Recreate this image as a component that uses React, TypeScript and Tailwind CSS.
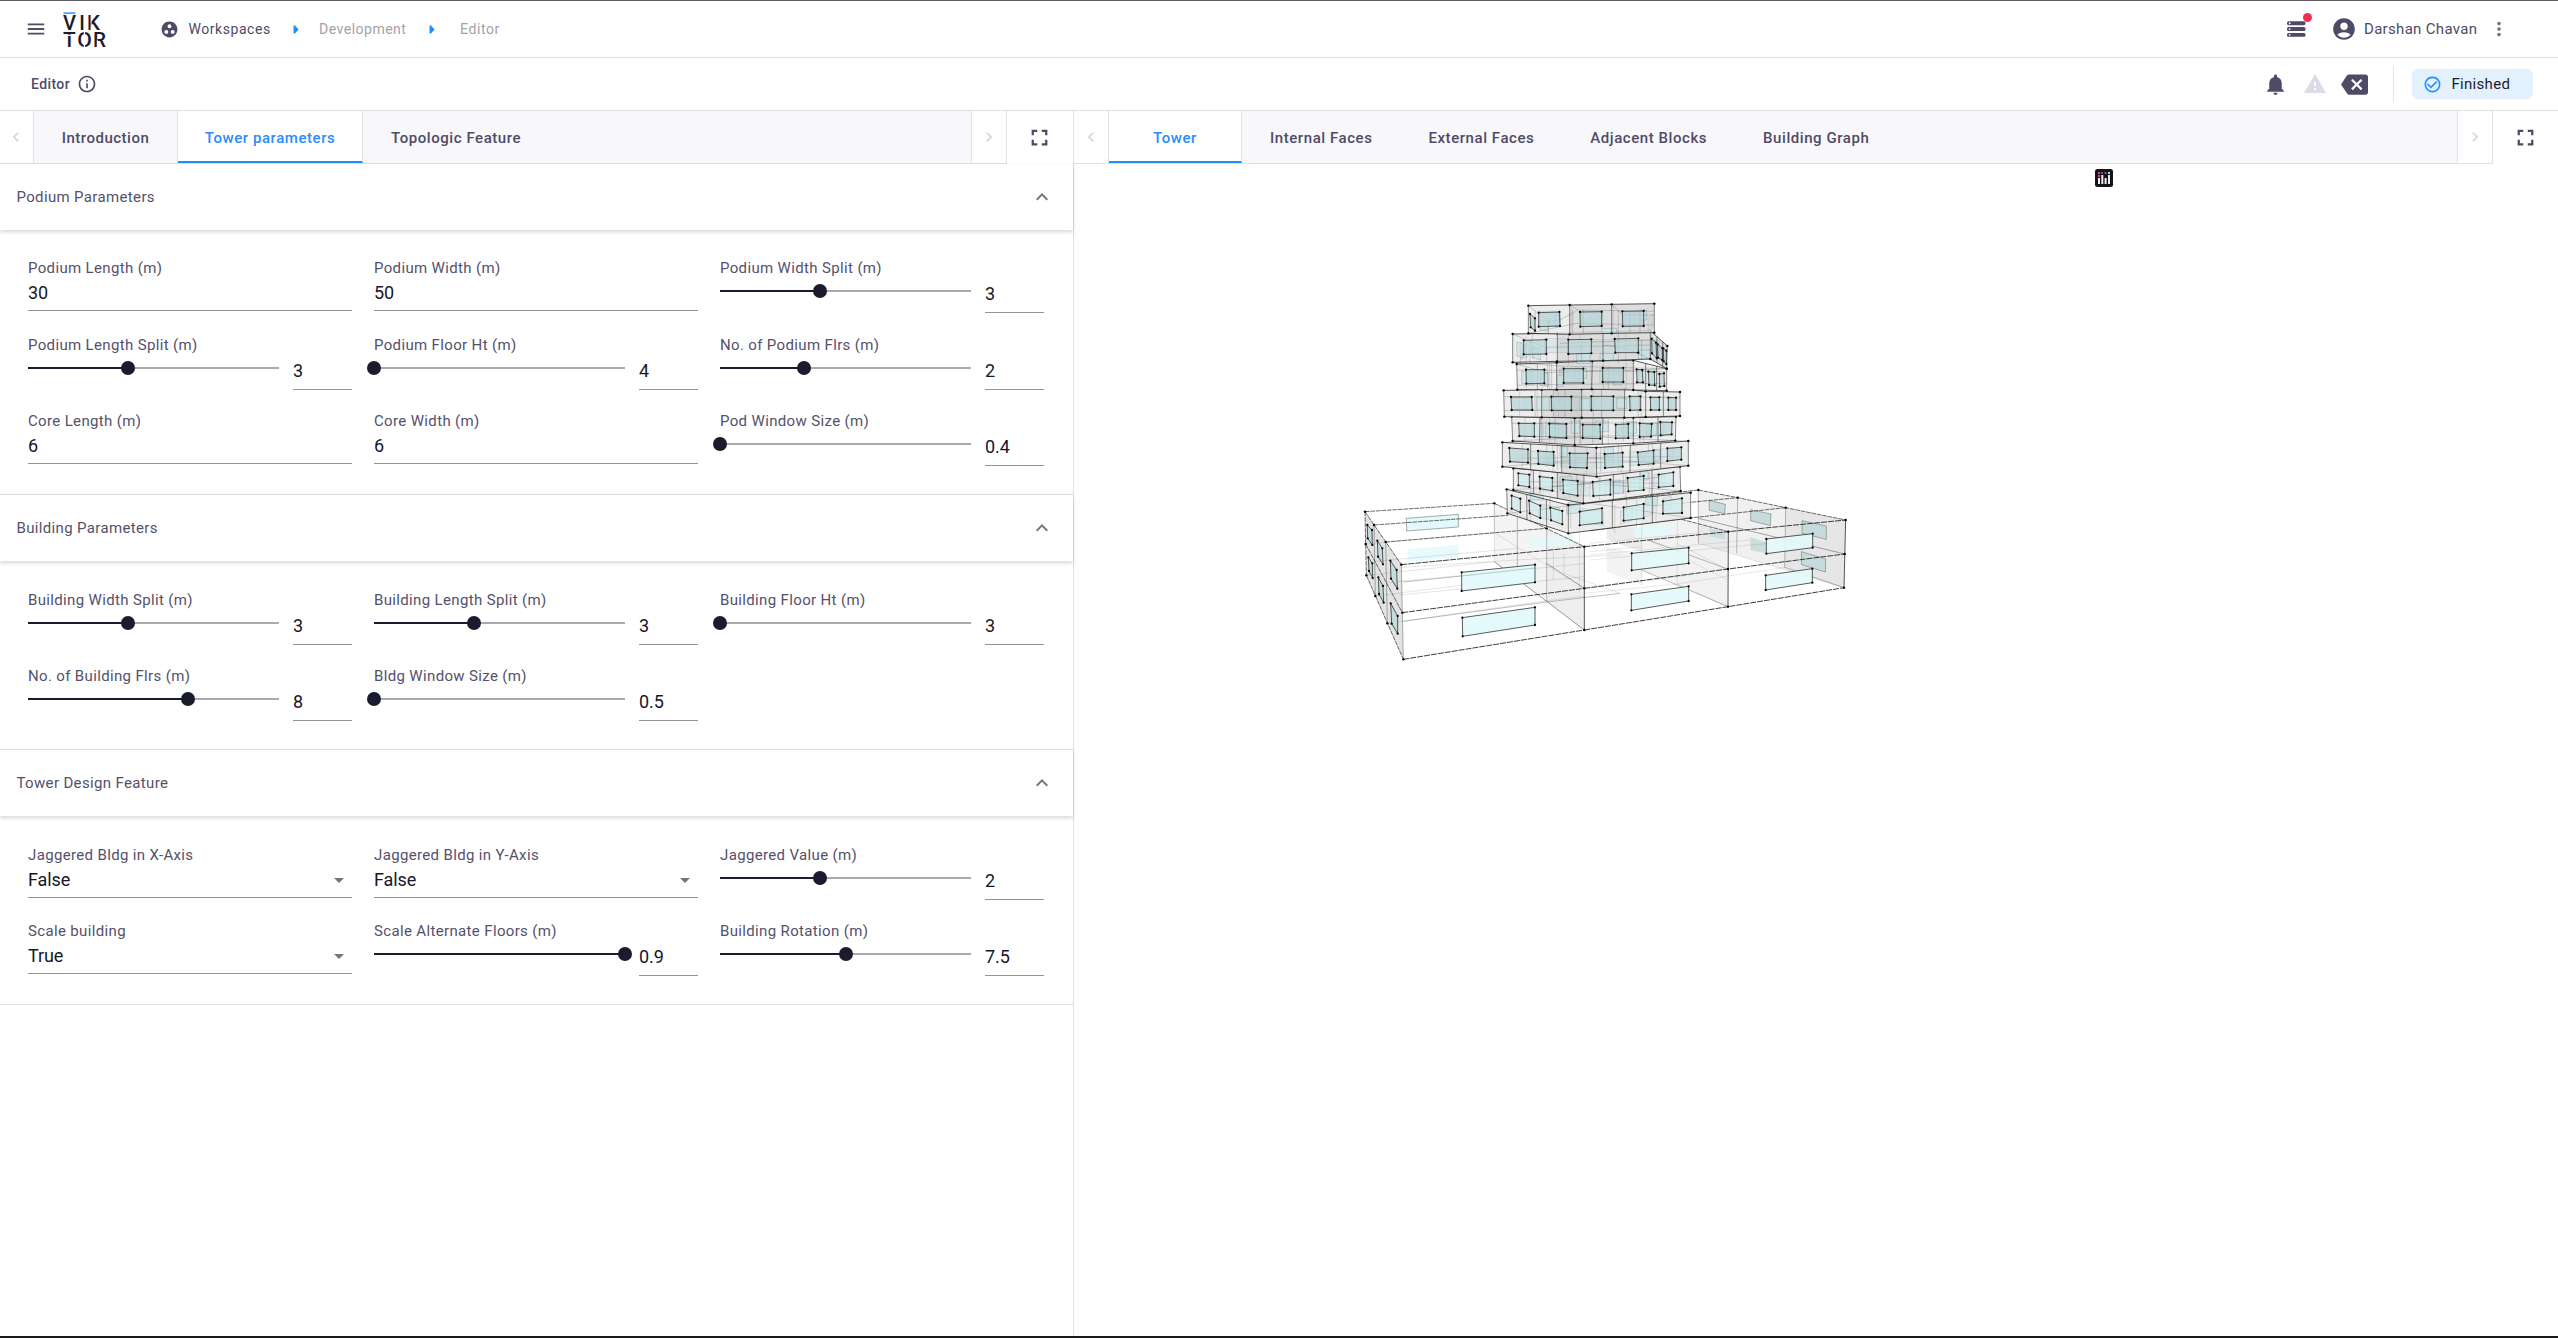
import type { ReactNode } from "react";
import {
  MdAccountCircle,
  MdArrowDropDown,
  MdBackspace,
  MdCheckCircleOutline,
  MdChevronLeft,
  MdChevronRight,
  MdExpandLess,
  MdFullscreen,
  MdGroupWork,
  MdInfoOutline,
  MdMenu,
  MdMoreVert,
  MdNotifications,
  MdWarning,
} from "react-icons/md";

/* ---------- header ---------- */

function Logo() {
  return (
    <svg className="mt-px ml-[26px] h-9 w-11 shrink-0 overflow-visible" viewBox="0 0 44 36" fontFamily="Roboto" fontWeight="500" fill="#1b1b2e">
      <rect x="0.5" y="0.4" width="12" height="1.4" fill="#1f8fff" />
      <g fontSize="21">
        <text x="0" y="18.2" textLength="13" lengthAdjust="spacingAndGlyphs">V</text>
        <text x="16.2" y="18.2" textLength="5.6" lengthAdjust="spacingAndGlyphs">I</text>
        <text x="24" y="18.2" textLength="13" lengthAdjust="spacingAndGlyphs">K</text>
        <text x="0" y="35.4" textLength="12.6" lengthAdjust="spacingAndGlyphs">T</text>
        <text x="14.2" y="35.4" textLength="14.6" lengthAdjust="spacingAndGlyphs">O</text>
        <text x="30" y="35.4" textLength="13" lengthAdjust="spacingAndGlyphs">R</text>
      </g>
      <g fill="#fff">
        <rect x="0" y="22.6" width="13" height="1.3" />
        <rect x="20.8" y="19" width="1.3" height="17" />
        <rect x="27.6" y="2.5" width="1" height="16.5" />
        <rect x="33.8" y="27.6" width="1" height="8.4" />
      </g>
    </svg>
  );
}

function Crumb() {
  return (
    <svg className="h-[9px] w-[6px] shrink-0" viewBox="0 0 6 9">
      <path d="M0.5 0.5H2L5.6 4.5L2 8.5H0.5Z" fill="#1f8fff" />
    </svg>
  );
}

function JobsIcon() {
  return (
    <div className="relative h-4 w-[19px]">
      <svg className="h-4 w-[19px]" viewBox="0 0 19 16">
        {[0.3, 6.1, 11.9].map((y) => (
          <g key={y}>
            <rect x="0" y={y} width="18.5" height="3.9" rx="1.6" fill="#4f4b66" />
            <circle cx="2.7" cy={y + 1.95} r="0.9" fill="#fff" />
          </g>
        ))}
      </svg>
      <span className="absolute -top-[8px] left-[16px] size-[9px] rounded-full bg-[#f52d52]" />
    </div>
  );
}

function Header() {
  return (
    <header className="flex h-[58px] shrink-0 items-center border-t border-b border-t-[#5d5b66] border-b-[#e0e0e0] text-[#4f4b66]">
      <MdMenu className="ml-[25px] size-[22px] shrink-0" />
      <div className="-ml-[10px]"><Logo /></div>
      <MdGroupWork className="ml-[53px] size-[19px]" />
      <span className="ml-[9.5px] w-[82px] text-sm tracking-[0.55px] whitespace-nowrap">Workspaces</span>
      <span className="ml-[22px]"><Crumb /></span>
      <span className="ml-[20.5px] w-[88px] text-sm tracking-[0.5px] whitespace-nowrap text-[#a2a2a6]">Development</span>
      <span className="ml-[22px]"><Crumb /></span>
      <span className="ml-[25px] text-sm tracking-[0.6px] text-[#a2a2a6]">Editor</span>
      <div className="ml-auto flex items-center">
        <JobsIcon />
        <MdAccountCircle className="ml-[25px] size-[26px]" />
        <span className="ml-[7px] w-[114px] text-[15px] tracking-[0.31px] whitespace-nowrap">Darshan Chavan</span>
        <MdMoreVert className="mr-[48px] ml-[10px] size-[22px] text-[#757575]" />
      </div>
    </header>
  );
}

function SubHeader() {
  return (
    <div className="flex h-[53px] shrink-0 items-center border-b border-[#e0e0e0] text-[#4f4b66]">
      <span className="ml-[31px] w-[40px] text-sm font-medium tracking-[0.4px]">Editor</span>
      <MdInfoOutline className="ml-[6px] size-5" />
      <div className="ml-auto flex items-center">
        <MdNotifications className="size-[25px]" />
        <MdWarning className="ml-[15px] size-6 text-[#dcdce9]" />
        <MdBackspace className="ml-[14px] size-[27px]" />
        <span className="ml-[25px] h-9 w-px bg-[#e4e4e4]" />
        <div className="mr-[25px] ml-[18px] flex h-[30px] w-[121px] items-center rounded-md bg-[#e3f1ff]">
          <MdCheckCircleOutline className="ml-[11px] size-[19px] text-[#1f8fff]" />
          <span className="ml-[9.5px] text-[15px] tracking-[0.3px] text-[#1b1b2e]">Finished</span>
        </div>
      </div>
    </div>
  );
}

/* ---------- tabs ---------- */

function TabBar({ tabs, active, side }: { tabs: string[]; active: string; side: "left" | "right" }) {
  return (
    <div className="flex h-[53px] shrink-0">
      <div className="flex min-w-0 flex-1 border-b border-[#e0e0e0]">
        <div className={"flex shrink-0 items-center justify-center border-r border-[#e0e0e0] " + (side === "left" ? "w-[34px] pr-[2px]" : "w-[35px]")}>
          <MdChevronLeft className="size-5 text-[#d6d6e6]" />
        </div>
        <div className="flex min-w-0 flex-1 bg-[#f8f7fc]">
          {tabs.map((t) => (
            <div
              key={t}
              className={
                "flex items-center justify-center pt-[2px] text-[15px] font-medium whitespace-nowrap " +
                (t === active
                  ? (side === "right" ? "w-[133px] " : "w-[185px] ") + "border-r border-b-2 border-r-[#e0e0e0] border-b-[#1f8fff] bg-white pt-[4px] text-[#2b8cff]"
                  : "px-[28px] text-[#4f4b66]") +
                (t === "Introduction" ? " w-[144px] border-r border-[#e0e0e0] px-0 tracking-[0.5px]" : " tracking-[0.56px]")
              }
            >
              {t}
            </div>
          ))}
        </div>
        <div className="flex w-9 shrink-0 items-center justify-center border-x border-[#e0e0e0]">
          <MdChevronRight className="size-5 text-[#d6d6e6]" />
        </div>
      </div>
      <div className={"flex shrink-0 items-center justify-center text-[#4f4b66] " + (side === "left" ? "w-[66px] pr-px" : "w-[65px]")}>
        <MdFullscreen className="size-[27px]" />
      </div>
    </div>
  );
}

/* ---------- form fields ---------- */

type Field =
  | { kind: "number"; label: string; value: string }
  | { kind: "select"; label: string; value: string }
  | { kind: "slider"; label: string; value: string; at: number };

function FieldView({ f }: { f: Field }) {
  return (
    <div className="h-full">
      <div className="h-5 text-[15px] leading-5 tracking-[0.35px] whitespace-nowrap text-[#55516b]">{f.label}</div>
      {f.kind === "slider" ? (
        <div className="flex">
          <div className="mt-[5px] flex h-[15px] w-[251px] items-center">
            <div className="relative h-0.5 w-full bg-[#aaa9b1]">
              <div className="h-0.5 bg-[#1b1b2e]" style={{ width: f.at + "%" }} />
              <span className="absolute -top-[6px] -ml-[7px] size-[14px] rounded-full bg-[#1b1b2e]" style={{ left: f.at + "%" }} />
            </div>
          </div>
          <div className="ml-[14px] flex h-[35px] w-[59px] items-center border-b border-[#949494] pb-[3px] text-lg leading-none text-[#16162a]">{f.value}</div>
        </div>
      ) : (
        <div className="flex h-[33px] items-center justify-between border-b border-[#949494] pb-[2px] text-lg leading-none tracking-[-0.1px] text-[#16162a]">
          {f.value}
          {f.kind === "select" && <MdArrowDropDown className="mr-[1px] size-6 text-[#757575]" />}
        </div>
      )}
    </div>
  );
}

function Section({ title, fields, rows }: { title: string; fields: Field[]; rows: 2 | 3 }) {
  return (
    <section className={"flex flex-col border-b border-[#e0e0e0] " + (rows === 3 ? "h-[331px]" : "h-[255px]")}>
      <div className="flex h-[66px] shrink-0 items-center justify-between pr-[19px] pl-[16.5px] shadow-[0_2px_4px_rgba(0,0,0,0.16)]">
        <span className="text-[15px] tracking-[0.35px] text-[#55516b]">{title}</span>
        <MdExpandLess className="size-6 text-[#757575]" />
      </div>
      <div className={"grid grid-cols-[324px_324px_324px] gap-x-[22px] pl-7 " + (rows === 3 ? "grid-rows-[77px_76px_76px] pt-[28px]" : "auto-rows-[76px] pt-[29px]")}>
        {fields.map((f) => <FieldView key={f.label} f={f} />)}
      </div>
    </section>
  );
}

const podium: Field[] = [
  { kind: "number", label: "Podium Length (m)", value: "30" },
  { kind: "number", label: "Podium Width (m)", value: "50" },
  { kind: "slider", label: "Podium Width Split (m)", value: "3", at: 40 },
  { kind: "slider", label: "Podium Length Split (m)", value: "3", at: 40 },
  { kind: "slider", label: "Podium Floor Ht (m)", value: "4", at: 0 },
  { kind: "slider", label: "No. of Podium Flrs (m)", value: "2", at: 33.3 },
  { kind: "number", label: "Core Length (m)", value: "6" },
  { kind: "number", label: "Core Width (m)", value: "6" },
  { kind: "slider", label: "Pod Window Size (m)", value: "0.4", at: 0 },
];
const building: Field[] = [
  { kind: "slider", label: "Building Width Split (m)", value: "3", at: 40 },
  { kind: "slider", label: "Building Length Split (m)", value: "3", at: 40 },
  { kind: "slider", label: "Building Floor Ht (m)", value: "3", at: 0 },
  { kind: "slider", label: "No. of Building Flrs (m)", value: "8", at: 63.6 },
  { kind: "slider", label: "Bldg Window Size (m)", value: "0.5", at: 0 },
];
const design: Field[] = [
  { kind: "select", label: "Jaggered Bldg in X-Axis", value: "False" },
  { kind: "select", label: "Jaggered Bldg in Y-Axis", value: "False" },
  { kind: "slider", label: "Jaggered Value (m)", value: "2", at: 40 },
  { kind: "select", label: "Scale building", value: "True" },
  { kind: "slider", label: "Scale Alternate Floors (m)", value: "0.9", at: 100 },
  { kind: "slider", label: "Building Rotation (m)", value: "7.5", at: 50 },
];

/* ---------- 3D model ---------- */

/* The model is drawn on a grid of three units per pixel. */
const EDGE = "#1c1c1c";

function pairs(s: string) {
  return s.split(" ").map((p) => p.split(",").map(Number));
}

function Poly({ p, fill, o = 1, edge = 0 }: { p: string; fill: string; o?: number; edge?: number }) {
  return (
    <>
      <polygon points={p} fill={fill} fillOpacity={o} stroke={edge ? EDGE : "none"} strokeOpacity={edge} strokeWidth="2.4" />
      {edge > 0.5 && pairs(p).map(([x, y], i) => <circle key={i} cx={x} cy={y} r="3.4" fill="#000" />)}
    </>
  );
}

function Lines({ d, o = 0.85, dash, w = 2.6 }: { d: string[]; o?: number; dash?: string; w?: number }) {
  return (
    <>
      {d.map((p) => <polyline key={p} points={p} fill="none" stroke={EDGE} strokeOpacity={o} strokeWidth={w} strokeDasharray={dash} />)}
    </>
  );
}

function Dots({ p }: { p: string }) {
  return <>{pairs(p).map(([x, y], i) => <circle key={i} cx={x} cy={y} r="3.6" fill="#000" />)}</>;
}

const GLASS = "#e3f9fb";
const SHADE = "#c3dcde";

function PodiumLeft() {
  return (
    <g>
      <Poly p="75,95 184,254 190,538 79,286" fill="#e4e3e4" />
      <Poly p="463,70 733,200 733,450 463,245" fill="#d9d9d9" o={0.3} />
      <Poly p="620,145 733,200 733,450 620,362" fill="#d0d0d0" o={0.18} />
      <Poly p="202,208 356,194 356,231 203,245" fill={GLASS} o={0.85} />
      <Poly p="568,176 698,163 698,193 568,205" fill={GLASS} o={0.8} />
      <Poly p="199,115 355,103 355,141 200,153" fill={GLASS} edge={0.45} />
      <Lines o={0.17} w={2} d={["77,192 463,158 733,325", "463,158 463,245 733,450", "79,286 463,245", "106,348 532,295", "142,430 620,362 735,348", "106,244 532,205", "140,308 620,262 735,250", "187,262 560,238 840,225", "180,345 733,290", "640,215 640,300", "672,220 672,280 840,340", "718,130 718,340"]} />
      <Lines o={0.38} w={2.2} d={["532,100 532,295", "620,145 620,362", "463,70 463,158", "190,424 350,402 620,366 840,340", "190,306 365,288"]} />
      <Lines o={0.4} d={["184,254 187,398 190,538", "102,135 106,348", "137,186 142,430", "463,245 733,450", "733,325 620,250"]} />
      <Lines o={0.75} d={["75,95 463,70", "463,70 733,200", "75,95 184,254", "75,95 79,286", "77,192 187,398", "79,286 190,538", "102,135 505,106", "137,186 620,145"]} dash="14 2.5" />
      <Lines d={["733,200 733,450"]} />
      <Lines d={["184,254 733,200", "187,398 733,325", "190,538 733,450"]} w={3} dash="18 3" />
      {["82,135 96,150 97,195 83,175", "112,182 127,205 129,253 114,230", "151,242 170,270 172,326 153,296", "85,232 97,250 98,294 87,273", "115,292 129,318 131,368 117,342", "152,370 173,408 173,461 155,431"].map((p) => <Poly key={p} p={p} fill={SHADE} edge={0.9} />)}
      {["365,277 585,254 585,307 365,333", "367,413 585,382 585,435 368,469"].map((p) => <Poly key={p} p={p} fill={GLASS} edge={0.9} />)}
      <Lines o={0.3} w={2.2} d={["365,288 585,264"]} />
      <Dots p="75,95 102,135 137,186 184,254 187,398 190,538 79,286 77,192 106,348 142,430 463,70 733,200 733,325 733,450 620,145" />
    </g>
  );
}

function PodiumRight() {
  return (
    <g>
      <Poly p="325,30 767,120 762,323 325,190" fill="#dcdcdc" o={0.42} />
      <Poly p="587,83 767,120 762,323 584,262" fill="#cfcfcf" o={0.3} />
      <Poly p="155,95 275,118 415,155 414,380 260,312 155,270" fill="#dddddd" o={0.38} />
      <Poly p="50,145 155,140 155,217 50,178" fill="#cccccc" o={0.4} />
      <Poly p="50,200 155,225 155,315 50,275" fill="#dddddd" o={0.35} />
      <Poly p="132,142 244,135 244,167 135,172" fill={GLASS} o={0.85} />
      {["357,61 406,73 404,101 358,91", "482,89 543,102 541,137 482,122", "636,122 709,138 709,178 636,160", "634,215 707,237 706,276 635,254"].map((p) => <Poly key={p} p={p} fill="#c8dbdc" edge={0.4} />)}
      {["481,172 529,187 529,220 482,210", "358,145 404,155 404,178 358,170"].map((p) => <Poly key={p} p={p} fill="#cbdddd" />)}
      <Lines o={0.15} w={2} d={["325,115 764,222", "325,190 762,323", "155,95 155,315", "262,118 262,312 414,380", "0,225 262,200 480,180", "0,240 300,212 590,185", "0,190 330,158", "-17,340 262,312 584,262", "0,325 300,285", "260,190 415,270", "175,180 414,300", "0,215 155,200"]} />
      <Lines o={0.4} w={2.2} d={["325,30 325,190", "443,53 440,220", "587,83 584,262", "325,115 764,222", "155,270 414,380", "175,180 415,268", "584,262 762,323"]} />
      <Lines d={["415,155 414,380", "767,120 762,323"]} />
      <Lines o={0.75} dash="14 2.5" d={["275,118 415,155", "325,30 443,53 587,83 767,120", "0,68 325,30", "0,152 262,118 587,83", "190,78 443,53"]} />
      <Lines w={3} dash="18 3" d={["-17,200 415,155 767,120", "-17,325 414,267 764,222", "-17,450 414,380 762,323"]} />
      {["125,220 296,203 296,250 125,271", "124,343 296,319 296,363 124,391", "529,177 668,161 668,203 529,221", "527,286 667,266 667,308 527,330"].map((p) => <Poly key={p} p={p} fill={GLASS} o={0.9} edge={0.9} />)}
      <Dots p="325,30 443,53 587,83 767,120 764,222 762,323 414,267 414,380 415,155" />
    </g>
  );
}

type Floor = { top: string; bottom: string; cols: string[]; inner?: string[]; ghost?: string[]; shade?: string[]; win: string[]; tone: "w" | "s" };

/* Storeys from the podium upwards. */
const floors: Floor[] = [
  {
    top: "80,598 265,645 632,608", bottom: "82,670 265,730 632,684",
    cols: ["80,598 82,670", "140,613 141,690", "199,628 200,710", "265,645 265,730", "397,632 397,715", "517,620 517,699", "632,608 632,684"],
    inner: ["80,598 330,575 632,608", "82,670 330,640 632,684", "330,575 330,640", "140,613 420,582", "199,628 520,596", "160,592 397,632", "250,583 517,620", "210,588 210,655", "440,585 440,660"],
    ghost: ["497,620 533,618 533,647 497,645", "150,600 190,596 190,630 150,630", "260,640 300,630 300,668 260,672"],
    win: ["95,617 121,626 121,667 95,656", "147,632 181,647 181,684 149,670", "211,653 247,663 247,703 213,691", "299,665 366,655 366,698 299,706", "431,652 491,642 491,685 431,692", "549,634 606,625 606,669 549,671"], tone: "w",
  },
  {
    top: "100,535 312,553 600,530", bottom: "100,600 310,640 602,603",
    cols: ["100,535 100,600", "160,541 161,612", "232,547 232,627", "312,553 310,640", "400,546 400,628", "516,537 516,615", "600,530 602,603"],
    inner: ["100,600 340,580 602,603", "180,535 180,610", "290,530 290,600", "360,535 360,600", "430,532 430,610", "480,535 480,600", "120,575 580,580", "210,590 560,560"],
    ghost: ["240,560 275,560 275,600 240,600", "400,575 432,575 432,610 400,610", "480,545 505,545 505,570 480,570"],
    shade: ["232,547 312,553 310,640 232,627"],
    win: ["115,550 148,554 148,591 115,586", "179,560 217,564 217,602 180,596", "249,569 293,573 293,617 250,609", "338,576 391,569 391,614 340,618", "443,564 491,558 491,600 445,604", "536,554 580,547 580,588 536,592"], tone: "w",
  },
  {
    top: "67,457 349,473 625,453", bottom: "67,530 350,560 625,527",
    cols: ["67,457 67,530", "152,462 152,540", "245,467 245,549", "349,473 350,560", "451,465 450,548", "542,458 542,535", "625,453 625,527"],
    inner: ["67,530 340,505 625,527", "200,460 200,530", "232,460 232,540", "285,465 285,540", "415,460 415,540", "362,470 362,545", "505,460 505,530", "100,505 600,500", "160,520 540,515", "67,457 340,440 625,453"],
    ghost: ["240,470 262,470 262,500 240,500", "372,470 400,470 400,500 372,500", "520,480 540,480 540,510 520,510", "205,495 225,495 225,525 205,525"],
    shade: ["245,467 349,473 350,560 245,549"],
    win: ["88,474 144,478 144,518 90,515", "174,483 221,486 221,527 175,522", "269,490 323,490 321,534 270,532", "374,492 428,488 428,530 375,534", "473,487 521,481 521,521 476,525", "562,475 604,472 604,509 562,513"], tone: "s",
  },
  {
    top: "95,380 284,384 460,383 588,380", bottom: "98,453 284,465 460,460 586,452",
    cols: ["95,380 98,453", "180,381 178,458", "284,384 284,465", "369,383 367,464", "460,383 460,460", "534,382 534,456", "588,380 586,452"],
    inner: ["98,453 340,440 586,452", "185,381 185,455", "225,383 225,460", "300,385 300,462", "338,385 338,460", "430,383 430,455", "480,383 480,455", "95,400 588,398", "110,440 580,436"],
    ghost: ["197,398 235,398 235,440 197,440", "273,393 300,393 300,430 273,430", "440,395 470,395 470,430 440,430", "500,400 530,400 530,435 500,435", "345,393 385,393 385,425 345,425"],
    shade: ["284,384 369,383 367,464 284,465", "180,381 284,384 284,465 178,458"],
    win: ["116,400 163,400 163,440 118,438", "208,401 259,402 259,444 209,441", "308,404 360,404 361,446 308,444", "407,404 445,402 445,444 407,445", "479,400 515,402 513,440 479,441", "541,396 576,397 575,433 542,436"], tone: "s",
  },
  {
    top: "71,301 185,299 305,298 434,296 497,304 600,306", bottom: "73,380 185,382 305,383 433,383 497,381 600,378",
    cols: ["71,301 73,380", "185,299 185,382", "305,298 305,383", "434,296 433,383", "497,304 497,381", "550,305 550,380", "600,306 600,378"],
    inner: ["165,301 165,381", "220,300 220,381", "255,300 255,381", "340,300 340,383", "365,300 365,383", "475,303 475,381", "71,320 600,322", "73,362 600,360"],
    ghost: ["170,321 208,321 208,360 170,360", "300,326 330,326 330,360 300,360", "410,325 440,325 440,355 410,355"],
    shade: ["185,299 305,298 305,383 185,382", "305,298 434,296 433,383 305,383", "220,300 305,298 305,383 220,382"],
    win: ["93,321 155,321 157,360 95,360", "214,320 274,320 274,361 215,361", "334,319 400,319 400,361 334,361", "449,319 481,319 481,360 450,361", "511,322 538,322 538,360 512,360", "565,323 588,323 588,360 565,360"], tone: "s",
  },
  {
    top: "110,222 230,218 337,213 460,211 560,236", bottom: "112,299 230,299 335,298 460,300 560,302",
    cols: ["110,222 112,299", "230,218 230,299", "337,213 335,298", "460,211 460,300", "497,221 497,300", "530,229 530,301", "560,236 560,302"],
    inner: ["172,225 172,299", "203,222 203,299", "215,222 215,299", "370,220 370,299", "385,230 385,299", "110,240 560,245", "112,285 560,280", "110,222 200,248 460,240 560,236"],
    ghost: ["125,244 156,244 156,280 125,280", "180,250 205,250 205,288 181,288", "232,255 250,255 250,290 232,290", "285,235 320,235 320,265 285,265", "400,250 425,250 425,285 400,285"],
    shade: ["230,218 337,213 335,298 230,299", "337,213 460,211 460,300 335,298"],
    win: ["138,239 193,239 193,280 139,281", "251,236 310,236 310,279 251,279", "368,234 430,234 430,276 368,276", "470,238 487,240 489,277 471,277", "505,245 523,246 524,286 507,285", "538,252 552,250 553,288 539,290"], tone: "s",
  },
  {
    top: "98,132 231,130 369,125 511,122 562,168", bottom: "98,217 231,214 369,212 511,207 560,236",
    cols: ["98,132 98,217", "232,130 232,214", "369,125 369,212", "511,122 511,207", "531,140 531,218", "548,156 548,229", "562,168 560,236"],
    inner: ["98,132 150,155 200,172 511,165", "150,155 150,217", "200,172 200,216", "240,160 511,150", "98,217 240,228 560,236", "265,135 265,225", "305,150 305,215", "415,130 415,220", "485,150 485,210", "511,207 440,175 369,165"],
    ghost: ["110,156 128,160 129,203 111,199", "157,170 180,175 182,210 158,203", "360,190 400,190 400,212 360,212", "290,190 330,190 330,220 290,220", "475,180 510,180 510,207 475,207"],
    shade: ["232,130 369,125 369,212 232,214", "369,125 511,122 511,207 369,212", "511,122 562,168 560,236 511,207"],
    win: ["131,151 199,149 199,192 131,193", "265,149 334,148 334,190 265,192", "404,147 475,145 475,188 406,188", "515,146 528,158 530,205 516,190", "533,163 547,175 547,210 534,203", "550,175 559,182 559,222 551,214"], tone: "s",
  },
  {
    top: "145,47 269,45 395,43 523,41", bottom: "145,130 269,133 395,130 523,128",
    cols: ["145,47 145,130", "269,45 269,133", "395,43 395,130", "523,41 523,128"],
    inner: ["145,47 165,62 205,95 240,110", "165,62 165,130", "205,80 205,130", "269,45 295,60 523,64", "278,60 278,130", "295,60 240,90 205,95", "310,60 310,130", "450,65 450,125", "415,60 415,128", "145,130 290,100 523,105", "480,62 480,128", "395,43 430,75 523,75"],
    ghost: ["180,90 205,95 205,125 180,120", "225,75 240,75 240,110 225,110", "365,115 410,115 410,130 365,130", "480,60 500,60 500,90 480,90"],
    shade: ["269,45 395,43 395,130 269,133", "395,43 523,41 523,128 395,130"],
    win: ["176,68 238,66 240,108 176,110", "300,66 365,65 365,108 301,110", "427,64 491,63 491,108 428,109", "150,72 165,85 165,122 152,112"], tone: "s",
  },
];

function FloorView({ f }: { f: Floor }) {
  const outline = f.top + " " + f.bottom.split(" ").reverse().join(" ");
  const glass = f.tone === "w" ? "#cfecef" : "#b8d6d9";
  return (
    <g>
      <Poly p={outline} fill="#e8e8e8" o={0.8} />
      {/* far side of the storey, seen through the near walls */}
      <g transform="translate(669 0) scale(-1 1)">
        {f.win.slice(0, 5).map((p) => <Poly key={p} p={p} fill="#c3e2e5" o={0.42} edge={0.14} />)}
        <Lines o={0.22} w={2} d={f.cols.slice(1, -1)} />
      </g>
      {f.shade?.map((p) => <Poly key={p} p={p} fill="#b4b2b2" o={0.28} />)}
      {f.ghost?.map((p) => <Poly key={p} p={p} fill="#c3e2e5" o={0.7} edge={0.2} />)}
      <Lines o={0.28} w={2} d={f.inner ?? []} />
      {f.win.map((p) => <Poly key={p} p={p} fill={glass} o={0.72} edge={0.85} />)}
      <Lines d={[f.top, f.bottom]} />
      <Lines o={0.65} w={2.4} d={f.cols} />
      <Dots p={f.top + " " + f.bottom} />
    </g>
  );
}

function TowerModel() {
  return (
    <svg className="mt-[126px] ml-[266px] h-[380px] w-[520px]" viewBox="0 0 1560 1140">
      <g transform="translate(0 570)"><PodiumLeft /></g>
      <g transform="translate(750 570)"><PodiumRight /></g>
      <g transform="translate(420 0)">{floors.map((f) => <FloorView key={f.top} f={f} />)}</g>
    </svg>
  );
}

function PlotlyBadge() {
  return (
    <svg className="absolute top-[5px] left-[1021px] size-[18px]" viewBox="0 0 18 18">
      <rect width="18" height="18" rx="2.5" fill="#15131a" />
      <rect x="3" y="3" width="2" height="2" fill="#ff3c6e" />
      <rect x="6" y="3" width="2" height="2" fill="#a5386a" />
      <rect x="9.5" y="3" width="2" height="2" fill="#7f5a8f" />
      <rect x="13" y="3" width="2" height="2" fill="#8be0ff" />
      <rect x="3" y="6" width="2" height="2" fill="#ff3c6e" />
      <g fill="#eeeeee">
        <rect x="3" y="9" width="2" height="6" />
        <rect x="6.3" y="6" width="2" height="9" />
        <rect x="9.6" y="9" width="2" height="6" />
        <rect x="13" y="6" width="2" height="9" />
      </g>
    </svg>
  );
}

/* ---------- page ---------- */

function Panel({ children, className }: { children: ReactNode; className: string }) {
  return <div className={"flex flex-col " + className}>{children}</div>;
}

export default function App() {
  return (
    <div className="flex h-[1338px] w-[2558px] flex-col overflow-hidden border-b-2 border-[#1a1a1a] bg-white font-['Roboto',sans-serif]">
      <Header />
      <SubHeader />
      <main className="flex min-h-0 flex-1">
        <Panel className="w-[1074px] shrink-0 border-r border-[#e0e0e0]">
          <TabBar tabs={["Introduction", "Tower parameters", "Topologic Feature"]} active="Tower parameters" side="left" />
          <Section title="Podium Parameters" fields={podium} rows={3} />
          <Section title="Building Parameters" fields={building} rows={2} />
          <Section title="Tower Design Feature" fields={design} rows={2} />
        </Panel>
        <Panel className="min-w-0 flex-1">
          <TabBar tabs={["Tower", "Internal Faces", "External Faces", "Adjacent Blocks", "Building Graph"]} active="Tower" side="right" />
          <div className="relative min-h-0 flex-1">
            <TowerModel />
            <PlotlyBadge />
          </div>
        </Panel>
      </main>
    </div>
  );
}
